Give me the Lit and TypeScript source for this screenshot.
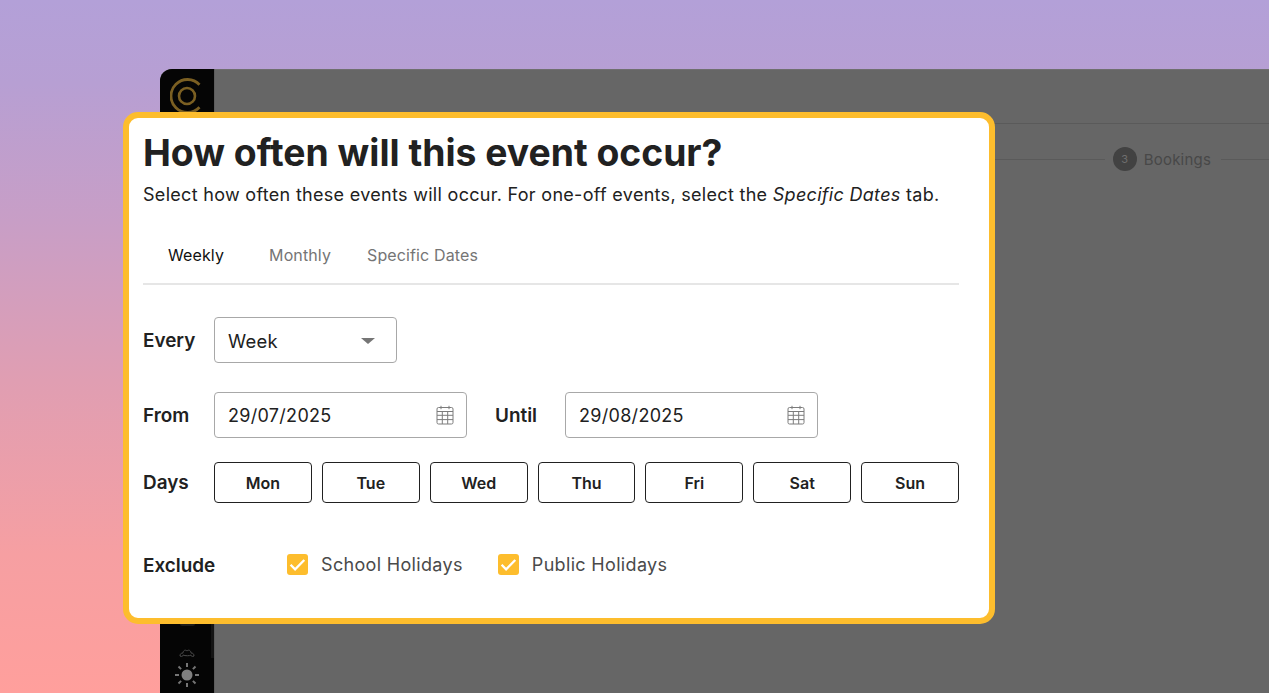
import { LitElement, html, css, svg } from "lit";
import { customElement } from "lit/decorators.js";

const calendar = html`<svg class="cal" viewBox="0 0 18 20" width="18" height="20" fill="none" stroke="#7c7c7c" stroke-width="1">
  <rect x="1" y="2.5" width="16" height="16.5" rx="1.5"></rect>
  <path d="M1 6.5h16M1 10.3h16M1 14.6h16M6.3 6.5V19M11.7 6.5V19M5 .8v3.4M13 .8v3.4"></path>
</svg>`;

const check = svg`<path d="M3.6 10.8l4.5 4.6 9.2-9.4" fill="none" stroke="#fff" stroke-width="2.3"></path>`;

@customElement("app-root")
export class AppRoot extends LitElement {
  static styles = css`
    :host {
      display: block;
      position: relative;
      width: 1269px;
      height: 693px;
      overflow: hidden;
      box-sizing: border-box;
      padding: 69px 0 0 160px;
      font-family: Inter, "Liberation Sans", sans-serif;
      color: #212121;
      background: linear-gradient(180deg, #b3a0d8 0%, #b79fd3 12%, #c89ec6 32%, #e09eb2 55%, #f69fa2 80%, #ff9f9c 100%);
    }
    .window {
      display: flex;
      height: 624px;
      border-radius: 12px 0 0 0;
      overflow: hidden;
      background: #666666;
      box-shadow: inset 0 1px 0 #6f6f6f;
    }
    .side {
      position: relative;
      width: 55px;
      flex: none;
      background: #050505;
      border-right: 1px solid #5c5c5c;
      box-sizing: border-box;
      display: flex;
      flex-direction: column;
      align-items: center;
      justify-content: space-between;
      padding: 9px 0 6px;
    }
    .scroll {
      position: absolute;
      right: 0;
      top: 60px;
      bottom: 35px;
      width: 3px;
      background: #141414;
    }
    .side-bottom { display: flex; flex-direction: column; align-items: center; }
    .side-item {
      width: 15px;
      height: 5px;
      margin-bottom: 22px;
      background: #1c1c1c;
      border-radius: 0 0 2px 2px;
    }
    .cloud { margin-bottom: 5px; }
    .main { flex: 1; min-width: 0; }
    .top {
      height: 55px;
      box-sizing: border-box;
      border-bottom: 1px solid #5a5a5a;
    }
    .steps {
      display: flex;
      align-items: center;
      height: 70px;
    }
    .line { height: 1px; background: #5a5a5a; }
    .line.a { flex: 1; }
    .line.b { width: 48px; flex: none; }
    .step {
      display: flex;
      align-items: center;
      gap: 7px;
      margin: 0 10px 0 8px;
      color: #484848;
      font-size: 15px;
      letter-spacing: 0.2px;
    }
    .num {
      width: 24px;
      height: 24px;
      border-radius: 50%;
      background: #424242;
      color: #6e6e6e;
      font-size: 11px;
      display: flex;
      align-items: center;
      justify-content: center;
    }
    .card {
      position: absolute;
      left: 123px;
      top: 112px;
      width: 872px;
      height: 512px;
      box-sizing: border-box;
      background: #fff;
      border: 6px solid #fdbd2d;
      border-radius: 15px;
      padding: 10px 30px 0 14px;
    }
    h1 {
      margin: 0;
      font-size: 37.3px;
      line-height: 50px;
      font-weight: 700;
      color: #212121;
    }
    .sub {
      margin: 5px 0 0;
      font-size: 18px;
      line-height: 24px;
      letter-spacing: 0.3px;
      color: #212121;
    }
    .tabs {
      display: flex;
      margin-top: 24px;
      height: 54px;
      box-sizing: border-box;
      border-bottom: 2px solid #e6e6e6;
      padding: 0 0 4px 25px;
      gap: 36px;
      font-size: 16px;
      letter-spacing: 0.12px;
      color: #757575;
      align-items: center;
    }
    .tabs .active { color: #111; margin-right: 9px; }
    .row { display: flex; align-items: center; }
    .label { font-size: 18.9px; font-weight: 600; color: #212121; width: 71px; flex: none; }
    .r1 { margin-top: 32px; }
    .r2 { margin-top: 29px; }
    .r3 { margin-top: 24px; }
    .r4 { margin-top: 50px; }
    .field {
      box-sizing: border-box;
      height: 46px;
      border: 1px solid #a8a8a8;
      border-radius: 4px;
      display: flex;
      align-items: center;
      justify-content: space-between;
      padding: 0 12px 0 13px;
      font-size: 18px;
      letter-spacing: 0.3px;
      color: #212121;
      background: #fff;
    }
    .select { width: 183px; padding: 2px 21px 0 13px; font-size: 18.4px; }
    .caret {
      width: 0;
      height: 0;
      border-left: 7px solid transparent;
      border-right: 7px solid transparent;
      border-top: 6px solid #757575;
    }
    .date { width: 253px; }
    .until { width: 70px; margin-left: 28px; }
    .days { display: flex; gap: 10px; width: 745px; }
    .day {
      box-sizing: border-box;
      flex: 1;
      height: 41px;
      border: 1px solid #212121;
      border-radius: 4px;
      display: flex;
      align-items: center;
      justify-content: center;
      font-size: 16px;
      font-weight: 600;
      color: #212121;
      background: #fff;
    }
    .r4 .label { width: 144px; margin-top: 1px; }
    .check {
      display: flex;
      align-items: center;
      gap: 13px;
      font-size: 18px;
      letter-spacing: 0.33px;
      color: #4a4a4a;
      margin: -1px 35px 0 0;
    }
    .box { display: block; width: 21px; height: 21px; border-radius: 3px; background: #fdbd2d; }
  `;

  render() {
    return html`
      <div class="window">
        <aside class="side">
          <span class="scroll"></span>
          <svg width="34" height="40" viewBox="0 0 34 40" fill="none" stroke="#7b5f22">
            <path d="M29.5 6.7A16.5 16.5 0 1 0 29.5 29.3" stroke-width="2.8"></path>
            <circle cx="17" cy="18" r="8" stroke-width="2.6"></circle>
          </svg>
          <div class="side-bottom">
            <span class="side-item"></span>
            <svg class="cloud" width="16" height="10" viewBox="0 0 16 10" fill="none" stroke="#4c4c4c" stroke-width="1">
              <path d="M1 8c0-2 1-3 3-3 0-2 2-4 4-2 2-2 4 0 4 2 2 0 3 1 3 3-2 1-3 0-3-1-1 1-6 1-8 0 0 1-1 2-3 1z"></path>
            </svg>
            <svg width="24" height="24" viewBox="0 0 24 24" fill="#808080" stroke="#757575" stroke-width="2">
              <circle cx="12" cy="12" r="5.5" stroke="none"></circle>
              <path d="M12 0v4M12 20v4M0 12h4M20 12h4M3.5 3.5l2.6 2.6M17.9 17.9l2.6 2.6M3.5 20.5l2.6-2.6M17.9 6.1l2.6-2.6"></path>
            </svg>
          </div>
        </aside>
        <div class="main">
          <div class="top"></div>
          <div class="steps">
            <span class="line a"></span>
            <div class="step"><span class="num">3</span>Bookings</div>
            <span class="line b"></span>
          </div>
        </div>
      </div>
      <section class="card">
        <h1>How often will this event occur?</h1>
        <p class="sub">Select how often these events will occur. For one-off events, select the <em>Specific Dates</em> tab.</p>
        <div class="tabs">
          <span class="active">Weekly</span><span>Monthly</span><span>Specific Dates</span>
        </div>
        <div class="row r1">
          <span class="label">Every</span>
          <div class="field select"><span>Week</span><span class="caret"></span></div>
        </div>
        <div class="row r2">
          <span class="label">From</span>
          <div class="field date"><span>29/07/2025</span>${calendar}</div>
          <span class="label until">Until</span>
          <div class="field date"><span>29/08/2025</span>${calendar}</div>
        </div>
        <div class="row r3">
          <span class="label">Days</span>
          <div class="days">
            ${["Mon", "Tue", "Wed", "Thu", "Fri", "Sat", "Sun"].map((d) => html`<div class="day">${d}</div>`)}
          </div>
        </div>
        <div class="row r4">
          <span class="label">Exclude</span>
          <label class="check"><svg class="box" viewBox="0 0 21 21">${check}</svg>School Holidays</label>
          <label class="check"><svg class="box" viewBox="0 0 21 21">${check}</svg>Public Holidays</label>
        </div>
      </section>
    `;
  }
}
